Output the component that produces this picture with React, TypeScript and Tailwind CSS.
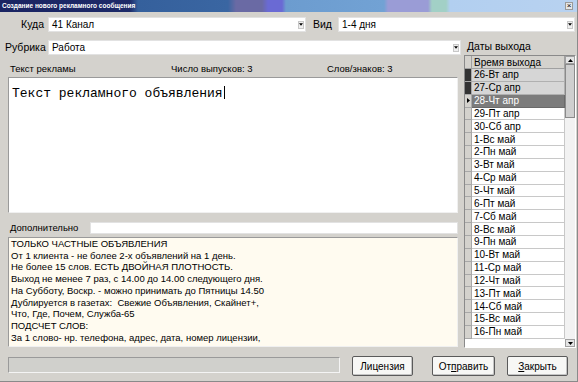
import React from "react";

const rows = [
  "26-Вт апр",
  "27-Ср апр",
  "28-Чт апр",
  "29-Пт апр",
  "30-Сб апр",
  "1-Вс май",
  "2-Пн май",
  "3-Вт май",
  "4-Ср май",
  "5-Чт май",
  "6-Пт май",
  "7-Сб май",
  "8-Вс май",
  "9-Пн май",
  "10-Вт май",
  "11-Ср май",
  "12-Чт май",
  "13-Пт май",
  "14-Сб май",
  "15-Вс май",
  "16-Пн май",
];

const memo = [
  "ТОЛЬКО ЧАСТНЫЕ ОБЪЯВЛЕНИЯ",
  "От 1 клиента - не более 2-х объявлений на 1 день.",
  "Не более 15 слов. ЕСТЬ ДВОЙНАЯ ПЛОТНОСТЬ.",
  "Выход не менее 7 раз, с 14.00 до 14.00 следующего дня.",
  "На Субботу, Воскр. - можно принимать до Пятницы 14.50",
  "Дублируется в газетах:  Свежие Объявления, Скайнет+,",
  "Что, Где, Почем, Служба-65",
  "ПОДСЧЕТ СЛОВ:",
  "За 1 слово- нр. телефона, адрес, дата, номер лицензии,",
];

function Arrow({ up }: { up?: boolean }) {
  return (
    <svg width="5" height="3" viewBox="0 0 5 3">
      {up ? <polygon points="0,3 5,3 2.5,0" fill="#000" /> : <polygon points="0,0 5,0 2.5,3" fill="#000" />}
    </svg>
  );
}

function Combo({ className, text }: { className: string; text: string }) {
  return (
    <div className={`flex h-[15px] items-center border border-[#e2e2e2] bg-white ${className}`}>
      <span className="flex-1 pl-[3px] text-[10px] leading-[13px] text-black">{text}</span>
      <span className="mr-[1px] flex h-[8px] w-[6px] items-center justify-center border border-[#c8c8c8] bg-[#eeeeee]">
        <Arrow />
      </span>
    </div>
  );
}

function Button({ children, className }: { children: React.ReactNode; className: string }) {
  return (
    <div
      className={`flex h-[20px] items-center justify-center rounded-[2px] border border-[#5a5a5a] bg-[#f7f7f5] text-[10px] text-black shadow-[inset_-1px_-1px_0_#c4c4c4] ${className}`}
    >
      {children}
    </div>
  );
}

export default function App() {
  return (
    <div className="flex h-[382px] w-[578px] flex-col overflow-hidden border-r border-b border-[#8a8a8a] bg-[#d4d2cd] font-['Liberation_Sans',Arial,sans-serif] text-black">
      {/* Title bar */}
      <div className="flex h-[12px] shrink-0 items-center bg-[linear-gradient(90deg,#1a2462_0px,#1d2a68_130px,#35609c_138px,#3a66a2_228px,#6a6aa4_236px,#6a6aa4_262px,#6a6ad4_268px,#6a6ad4_282px,#6c9ccf_286px,#72a2d4_384px,#9a9cd6_388px,#9a9cd6_428px,#a2d0c6_432px,#a2d0c6_446px,#b2cff0_450px,#b8d2f0_578px)] pl-[2px] pr-[4px]">
        <span className="flex-1 text-[6.5px] font-bold leading-[8px] text-white">
          Создание нового рекламного сообщения
        </span>
        <span className="flex h-[8px] w-[8px] items-center justify-center border border-[#9a9a9a] bg-[#e6e6e6] text-[8px] leading-[6px] text-black">
          ×
        </span>
      </div>

      {/* Top row */}
      <div className="mt-[5px] flex h-[15px] items-center">
        <span className="w-[45px] pr-[1px] text-right text-[10.5px]">Куда</span>
        <Combo className="ml-[3px] w-[258px]" text="41 Канал" />
        <span className="ml-[7px] w-[25px] text-[10.5px]">Вид</span>
        <Combo className="ml-[0px] w-[237px]" text="1-4 дня" />
      </div>

      {/* Main */}
      <div className="mt-[8px] flex">
        {/* Left column */}
        <div className="flex w-[462px] flex-col">
          <div className="flex h-[15px] items-center">
            <span className="w-[48px] pl-[5px] text-[10.5px]">Рубрика</span>
            <Combo className="w-[413px]" text="Работа" />
          </div>
          <div className="mt-[8px] flex h-[12px] items-center text-[9.5px]">
            <span className="w-[171px] pl-[10px]">Текст рекламы</span>
            <span className="w-[156px]">Число выпусков: 3</span>
            <span>Слов/знаков: 3</span>
          </div>
          <div className="ml-[8px] mt-[2px] h-[136px] w-[450px] border border-t-[#9a9a9a] border-l-[#9a9a9a] border-r-[#f0f0f0] border-b-[#f0f0f0] bg-white pl-[3px] pt-[2px]">
            <span className="font-['Liberation_Mono',monospace] text-[13px] leading-[16px] text-black">
              Текст рекламного объявления
            </span>
            <span className="ml-[1px] inline-block h-[13px] w-[1px] translate-y-[2px] bg-black" />
          </div>
          <div className="mt-[9px] flex h-[12px] items-center">
            <span className="w-[90px] pl-[10px] text-[9.5px]">Дополнительно</span>
            <div className="h-[12px] w-[368px] border border-[#e2e2e2] bg-white" />
          </div>
          <div className="ml-[8px] mt-[3px] h-[110px] w-[450px] overflow-hidden border border-t-[#9a9a9a] border-l-[#9a9a9a] border-r-[#f0f0f0] border-b-[#f0f0f0] bg-[#fffbf0] pl-[2px] pt-[0px]">
            {memo.map((l, i) => (
              <div key={i} className="whitespace-pre text-[9.5px] leading-[11.7px] text-black">
                {l}
              </div>
            ))}
          </div>
        </div>

        {/* Right column */}
        <div className="ml-[2px] flex w-[112px] flex-col">
          <div className="flex h-[14px] items-center pl-[3px] text-[10.5px]">Даты выхода</div>
          <div className="mt-[1px] flex h-[293px] w-[112px] border border-t-[#8a8a8a] border-l-[#8a8a8a] border-r-white border-b-white bg-white">
            <div className="flex w-[100px] flex-col">
              <div className="flex h-[13px] shrink-0">
                <div className="w-[7px] border-r border-b border-[#a0a0a0] bg-[#d4d2cd]" />
                <div className="flex flex-1 items-center border-r border-b border-[#a0a0a0] bg-[#d4d2cd] pl-[2px] text-[10px]">
                  Время выхода
                </div>
              </div>
              {rows.map((r, i) => {
                const sel = i === 2;
                const multi = i < 2;
                return (
                  <div key={r} className="flex h-[12.85px] shrink-0">
                    <div
                      className={`flex w-[7px] items-center justify-center border-r border-b border-[#a8a8a8] ${
                        multi ? "bg-[#333333]" : "bg-[#d4d2cd]"
                      }`}
                    >
                      {sel && (
                        <svg width="3" height="5" viewBox="0 0 3 5">
                          <polygon points="0,0 3,2.5 0,5" fill="#000" />
                        </svg>
                      )}
                    </div>
                    <div
                      className={`flex flex-1 items-center border-r border-b pl-[2px] text-[10px] ${
                        sel
                          ? "border-[#6a6a6a] bg-[#7c7c7c] text-white"
                          : multi
                          ? "border-[#b0b0b0] bg-[#d6d6d6] text-black"
                          : "border-[#c8c8c8] bg-white text-black"
                      }`}
                    >
                      {r}
                    </div>
                  </div>
                );
              })}
              <div className="flex-1 bg-white" />
            </div>
            <div className="flex w-[10px] flex-col bg-[#f2f2f2]">
              <div className="flex h-[8px] items-center justify-center border border-[#a0a0a0] bg-[#e4e4e4]">
                <Arrow up />
              </div>
              <div className="h-[54px] border border-[#8a8a8a] bg-[#cfcfcf]" />
              <div className="flex-1" />
              <div className="flex h-[8px] items-center justify-center border border-[#a0a0a0] bg-[#e4e4e4]">
                <Arrow />
              </div>
            </div>
          </div>
        </div>
      </div>

      {/* Bottom row */}
      <div className="mt-[8px] flex h-[20px] items-start">
        <div className="ml-[8px] mt-[1px] h-[16px] w-[332px] border border-t-[#9a9a9a] border-l-[#9a9a9a] border-r-[#f4f4f4] border-b-[#f4f4f4] bg-[#d0d0cc]" />
        <Button className="ml-[12px] w-[61px]">Лицензия</Button>
        <Button className="ml-[19px] w-[63px]">
          <span>
            От<span className="underline">п</span>равить
          </span>
        </Button>
        <Button className="ml-[12px] w-[61px]">
          <span>
            <span className="underline">З</span>акрыть
          </span>
        </Button>
      </div>
    </div>
  );
}
